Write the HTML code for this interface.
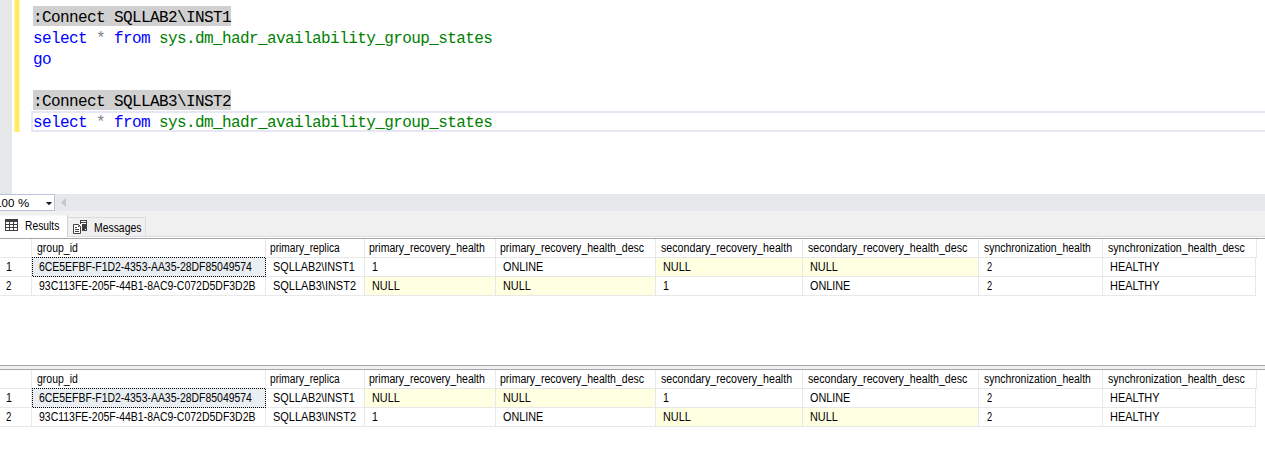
<!DOCTYPE html>
<html><head><meta charset="utf-8"><title>SSMS</title>
<style>
html,body{margin:0;padding:0;background:#fff;}
body{width:1265px;height:450px;position:relative;overflow:hidden;font-family:"Liberation Sans",sans-serif;}
.abs{position:absolute;}
#margin{left:0;top:0;width:12px;height:194px;background:#e6e7e8;}
#ybar{left:14px;top:0;width:6px;height:132px;background:linear-gradient(90deg,#fff6b0 0,#fff6b0 1px,#ffec62 1px,#ffec62 5px,#fff6b0 5px,#fff6b0 6px);}
.ln{position:absolute;left:33px;height:21px;line-height:21px;font-family:"Liberation Mono",monospace;font-size:16px;letter-spacing:-0.6px;white-space:pre;color:#000;}
.ln span{position:relative;top:2px;}
.hl{position:absolute;left:33px;width:198px;height:20px;background:#d0d0d0;}
.kw{color:#0000ff}.op{color:#808080}.sy{color:#008000}
#curline{left:31px;top:111px;width:1240px;height:17px;border:2px solid #e7e7f3;}
#zoombar{left:0;top:194px;width:1265px;height:17px;background:#e7e8ec;}
#zoombox{left:-3px;top:194px;width:56px;height:15px;background:#fff;border:1px solid #b7c2dc;}
#tabs{left:0;top:211px;width:1265px;height:27px;background:#f0f0f0;}
#tabline{left:0;top:238px;width:1265px;height:1px;background:#a4a4ac;}
#tabl2{left:67px;top:236px;width:1198px;height:1px;background:#dcdcdc;}
#tabl3{left:0;top:237px;width:1265px;height:1px;background:#fff;}
#tab1{left:0;top:215px;width:67px;height:22px;background:#fff;border-top:1px solid #f8f8f8;}
#tabsep{left:67px;top:215px;width:1px;height:22px;background:#d2d2d2;}
#tab2{left:67px;top:217px;width:79px;height:20px;background:#f0f0f0;border:1px solid #dcdcdc;box-sizing:border-box;}
.t{position:absolute;display:block;white-space:pre;font-size:12.5px;line-height:18px;height:18px;transform-origin:0 50%;color:#000;}
.hc,.c{position:absolute;height:18px;border-right:1px solid #e8e8e8;border-bottom:1px solid #e8e8e8;background:#fff;}
.null{background:#ffffe1;}
.sel{background:#e9eef3;}
.fr{position:absolute;}
.fr i{position:absolute;display:block;}
.fr .ft{left:0;top:0;width:234px;height:1px;background:repeating-linear-gradient(90deg,#000 0 1px,transparent 1px 2px);}
.fr .fb{left:0;top:19px;width:234px;height:1px;background:repeating-linear-gradient(90deg,transparent 0 1px,#000 1px 2px);}
.fr .fl{left:0;top:0;width:1px;height:20px;background:repeating-linear-gradient(180deg,#000 0 1px,transparent 1px 2px);}
.fr .frr{left:233px;top:0;width:1px;height:20px;background:repeating-linear-gradient(180deg,transparent 0 1px,#000 1px 2px);}
</style></head><body>
<div class="abs" id="margin"></div>
<div class="abs" id="ybar"></div>
<div class="abs" id="curline"></div>
<div class="hl" style="top:6px"></div>
<div class="hl" style="top:90px"></div>
<div class="ln" style="top:6px"><span>:Connect SQLLAB2&#92;INST1</span></div>
<div class="ln" style="top:27px"><span class="kw">select</span> <span class="op">*</span> <span class="kw">from</span> <span class="sy">sys.dm_hadr_availability_group_states</span></div>
<div class="ln" style="top:48px"><span class="kw">go</span></div>
<div class="ln" style="top:90px"><span>:Connect SQLLAB3&#92;INST2</span></div>
<div class="ln" style="top:111px"><span class="kw">select</span> <span class="op">*</span> <span class="kw">from</span> <span class="sy">sys.dm_hadr_availability_group_states</span></div>
<div class="abs" id="zoombar"></div>
<div class="abs" id="zoombox"></div>
<span class="t" style="left:-4.8px;top:194px;font-size:11.5px">100 </span><span class="t" style="left:18px;top:194px;font-size:11.5px;transform:scaleX(1.1)">%</span>
<svg class="abs" style="left:44px;top:199px" width="10" height="8" viewBox="0 0 10 8"><path d="M1.8 3 L8.2 3 L5 6.2 Z" fill="#1b1b28"/></svg>
<svg class="abs" style="left:59px;top:196px" width="10" height="14" viewBox="0 0 10 14"><path d="M7 2 L7 11 L2 6.5 Z" fill="#c4c6d0"/></svg>
<div class="abs" id="tabs"></div>
<div class="abs" id="tab1"></div>
<div class="abs" id="tab2"></div>
<div class="abs" id="tabsep"></div>
<div class="abs" id="tabl2"></div>
<div class="abs" id="tabl3"></div>
<div class="abs" id="tabline"></div>
<svg class="abs" style="left:5px;top:219px" width="13" height="12" viewBox="0 0 13 12"><rect x="0" y="0" width="13" height="12" fill="#3f3f3f"/><g fill="#fff"><rect x="1" y="3" width="3" height="2"/><rect x="5" y="3" width="3" height="2"/><rect x="9" y="3" width="3" height="2"/><rect x="1" y="6" width="3" height="2"/><rect x="5" y="6" width="3" height="2"/><rect x="9" y="6" width="3" height="2"/><rect x="1" y="9" width="3" height="2"/><rect x="5" y="9" width="3" height="2"/><rect x="9" y="9" width="3" height="2"/></g></svg>
<svg class="abs" style="left:72px;top:219px" width="16" height="16" viewBox="0 0 16 16"><rect x="8" y="1" width="7" height="11" fill="#404040"/><rect x="9" y="2" width="5" height="1" fill="#fff"/><rect x="9" y="4" width="5" height="1" fill="#fff"/><rect x="13" y="10" width="1" height="1" fill="#fff"/><rect x="1" y="5" width="9" height="10" fill="#f4f4f4"/><path d="M1.5 5.5H6.5L8.5 7.5V14.5H1.5Z" fill="#fff" stroke="#404040"/><path d="M6 6V8H8Z" fill="#404040"/><path d="M3 8.5H5M3 10.5H7M3 12.5H7" stroke="#404040"/></svg>
<span class="t" style="left:25.38px;top:217px;transform:scaleX(0.8244)">Results</span>
<span class="t" style="left:94.17px;top:219px;transform:scaleX(0.8321)">Messages</span>
<div class="grid">
<div class="hc" style="left:0px;top:239px;width:31px"></div>
<div class="hc" style="left:32px;top:239px;width:233px"></div>
<span class="t" style="left:36.60px;top:239px;transform:scaleX(0.8396)">group_id</span>
<div class="hc" style="left:266px;top:239px;width:98px"></div>
<span class="t" style="left:269.58px;top:239px;transform:scaleX(0.8153)">primary_replica</span>
<div class="hc" style="left:365px;top:239px;width:130px"></div>
<span class="t" style="left:368.86px;top:239px;transform:scaleX(0.8426)">primary_recovery_health</span>
<div class="hc" style="left:496px;top:239px;width:159px"></div>
<span class="t" style="left:499.56px;top:239px;transform:scaleX(0.8429)">primary_recovery_health_desc</span>
<div class="hc" style="left:656px;top:239px;width:146px"></div>
<span class="t" style="left:660.80px;top:239px;transform:scaleX(0.8536)">secondary_recovery_health</span>
<div class="hc" style="left:803px;top:239px;width:175px"></div>
<span class="t" style="left:807.70px;top:239px;transform:scaleX(0.8524)">secondary_recovery_health_desc</span>
<div class="hc" style="left:979px;top:239px;width:123px"></div>
<span class="t" style="left:983.80px;top:239px;transform:scaleX(0.8359)">synchronization_health</span>
<div class="hc" style="left:1103px;top:239px;width:153px"></div>
<span class="t" style="left:1107.50px;top:239px;transform:scaleX(0.8491)">synchronization_health_desc</span>
<div class="c" style="left:0px;top:258px;width:31px"></div>
<span class="t" style="left:6.15px;top:258px;transform:scaleX(0.8500)">1</span>
<div class="c sel" style="left:32px;top:258px;width:233px"></div>
<div class="fr" style="left:32px;top:257px"><i class="ft"></i><i class="fb"></i><i class="fl"></i><i class="frr"></i></div>
<span class="t" style="left:39.10px;top:258px;transform:scaleX(0.8349)">6CE5EFBF-F1D2-4353-AA35-28DF85049574</span>
<div class="c" style="left:266px;top:258px;width:98px"></div>
<span class="t" style="left:273.33px;top:258px;transform:scaleX(0.8667)">SQLLAB2&#92;INST1</span>
<div class="c" style="left:365px;top:258px;width:130px"></div>
<span class="t" style="left:372.35px;top:258px;transform:scaleX(0.8500)">1</span>
<div class="c" style="left:496px;top:258px;width:159px"></div>
<span class="t" style="left:502.90px;top:258px;transform:scaleX(0.8652)">ONLINE</span>
<div class="c null" style="left:656px;top:258px;width:146px"></div>
<span class="t" style="left:662.63px;top:258px;transform:scaleX(0.8710)">NULL</span>
<div class="c null" style="left:803px;top:258px;width:175px"></div>
<span class="t" style="left:809.63px;top:258px;transform:scaleX(0.8710)">NULL</span>
<div class="c" style="left:979px;top:258px;width:123px"></div>
<span class="t" style="left:986.70px;top:258px;transform:scaleX(0.7429)">2</span>
<div class="c" style="left:1103px;top:258px;width:152px"></div>
<span class="t" style="left:1109.93px;top:258px;transform:scaleX(0.8732)">HEALTHY</span>
<div class="c" style="left:0px;top:277px;width:31px"></div>
<span class="t" style="left:6.30px;top:277px;transform:scaleX(0.7714)">2</span>
<div class="c" style="left:32px;top:277px;width:233px"></div>
<span class="t" style="left:39.10px;top:277px;transform:scaleX(0.8384)">93C113FE-205F-44B1-8AC9-C072D5DF3D2B</span>
<div class="c" style="left:266px;top:277px;width:98px"></div>
<span class="t" style="left:273.32px;top:277px;transform:scaleX(0.8785)">SQLLAB3&#92;INST2</span>
<div class="c null" style="left:365px;top:277px;width:130px"></div>
<span class="t" style="left:371.63px;top:277px;transform:scaleX(0.8710)">NULL</span>
<div class="c null" style="left:496px;top:277px;width:159px"></div>
<span class="t" style="left:502.63px;top:277px;transform:scaleX(0.8710)">NULL</span>
<div class="c" style="left:656px;top:277px;width:146px"></div>
<span class="t" style="left:663.35px;top:277px;transform:scaleX(0.8500)">1</span>
<div class="c" style="left:803px;top:277px;width:175px"></div>
<span class="t" style="left:809.90px;top:277px;transform:scaleX(0.8652)">ONLINE</span>
<div class="c" style="left:979px;top:277px;width:123px"></div>
<span class="t" style="left:986.70px;top:277px;transform:scaleX(0.7429)">2</span>
<div class="c" style="left:1103px;top:277px;width:152px"></div>
<span class="t" style="left:1109.93px;top:277px;transform:scaleX(0.8732)">HEALTHY</span>
</div>
<div class="abs" style="left:0;top:365px;width:1265px;height:1px;background:#a6a6ae"></div>
<div class="abs" style="left:0;top:366px;width:1265px;height:3px;background:#f0f0f0"></div>
<div class="abs" style="left:0;top:369px;width:1265px;height:1px;background:#a6a6ae"></div>
<div class="grid">
<div class="hc" style="left:0px;top:370px;width:31px"></div>
<div class="hc" style="left:32px;top:370px;width:233px"></div>
<span class="t" style="left:36.60px;top:370px;transform:scaleX(0.8396)">group_id</span>
<div class="hc" style="left:266px;top:370px;width:98px"></div>
<span class="t" style="left:269.58px;top:370px;transform:scaleX(0.8153)">primary_replica</span>
<div class="hc" style="left:365px;top:370px;width:130px"></div>
<span class="t" style="left:368.86px;top:370px;transform:scaleX(0.8426)">primary_recovery_health</span>
<div class="hc" style="left:496px;top:370px;width:159px"></div>
<span class="t" style="left:499.56px;top:370px;transform:scaleX(0.8429)">primary_recovery_health_desc</span>
<div class="hc" style="left:656px;top:370px;width:146px"></div>
<span class="t" style="left:660.80px;top:370px;transform:scaleX(0.8536)">secondary_recovery_health</span>
<div class="hc" style="left:803px;top:370px;width:175px"></div>
<span class="t" style="left:807.70px;top:370px;transform:scaleX(0.8524)">secondary_recovery_health_desc</span>
<div class="hc" style="left:979px;top:370px;width:123px"></div>
<span class="t" style="left:983.80px;top:370px;transform:scaleX(0.8359)">synchronization_health</span>
<div class="hc" style="left:1103px;top:370px;width:153px"></div>
<span class="t" style="left:1107.50px;top:370px;transform:scaleX(0.8491)">synchronization_health_desc</span>
<div class="c" style="left:0px;top:389px;width:31px"></div>
<span class="t" style="left:6.15px;top:389px;transform:scaleX(0.8500)">1</span>
<div class="c sel" style="left:32px;top:389px;width:233px"></div>
<div class="fr" style="left:32px;top:388px"><i class="ft"></i><i class="fb"></i><i class="fl"></i><i class="frr"></i></div>
<span class="t" style="left:39.10px;top:389px;transform:scaleX(0.8349)">6CE5EFBF-F1D2-4353-AA35-28DF85049574</span>
<div class="c" style="left:266px;top:389px;width:98px"></div>
<span class="t" style="left:273.33px;top:389px;transform:scaleX(0.8667)">SQLLAB2&#92;INST1</span>
<div class="c null" style="left:365px;top:389px;width:130px"></div>
<span class="t" style="left:371.63px;top:389px;transform:scaleX(0.8710)">NULL</span>
<div class="c null" style="left:496px;top:389px;width:159px"></div>
<span class="t" style="left:502.63px;top:389px;transform:scaleX(0.8710)">NULL</span>
<div class="c" style="left:656px;top:389px;width:146px"></div>
<span class="t" style="left:663.35px;top:389px;transform:scaleX(0.8500)">1</span>
<div class="c" style="left:803px;top:389px;width:175px"></div>
<span class="t" style="left:809.90px;top:389px;transform:scaleX(0.8652)">ONLINE</span>
<div class="c" style="left:979px;top:389px;width:123px"></div>
<span class="t" style="left:986.70px;top:389px;transform:scaleX(0.7429)">2</span>
<div class="c" style="left:1103px;top:389px;width:152px"></div>
<span class="t" style="left:1109.93px;top:389px;transform:scaleX(0.8732)">HEALTHY</span>
<div class="c" style="left:0px;top:408px;width:31px"></div>
<span class="t" style="left:6.30px;top:408px;transform:scaleX(0.7714)">2</span>
<div class="c" style="left:32px;top:408px;width:233px"></div>
<span class="t" style="left:39.10px;top:408px;transform:scaleX(0.8384)">93C113FE-205F-44B1-8AC9-C072D5DF3D2B</span>
<div class="c" style="left:266px;top:408px;width:98px"></div>
<span class="t" style="left:273.32px;top:408px;transform:scaleX(0.8785)">SQLLAB3&#92;INST2</span>
<div class="c" style="left:365px;top:408px;width:130px"></div>
<span class="t" style="left:372.35px;top:408px;transform:scaleX(0.8500)">1</span>
<div class="c" style="left:496px;top:408px;width:159px"></div>
<span class="t" style="left:502.90px;top:408px;transform:scaleX(0.8652)">ONLINE</span>
<div class="c null" style="left:656px;top:408px;width:146px"></div>
<span class="t" style="left:662.63px;top:408px;transform:scaleX(0.8710)">NULL</span>
<div class="c null" style="left:803px;top:408px;width:175px"></div>
<span class="t" style="left:809.63px;top:408px;transform:scaleX(0.8710)">NULL</span>
<div class="c" style="left:979px;top:408px;width:123px"></div>
<span class="t" style="left:986.70px;top:408px;transform:scaleX(0.7429)">2</span>
<div class="c" style="left:1103px;top:408px;width:152px"></div>
<span class="t" style="left:1109.93px;top:408px;transform:scaleX(0.8732)">HEALTHY</span>
</div>
</body></html>
